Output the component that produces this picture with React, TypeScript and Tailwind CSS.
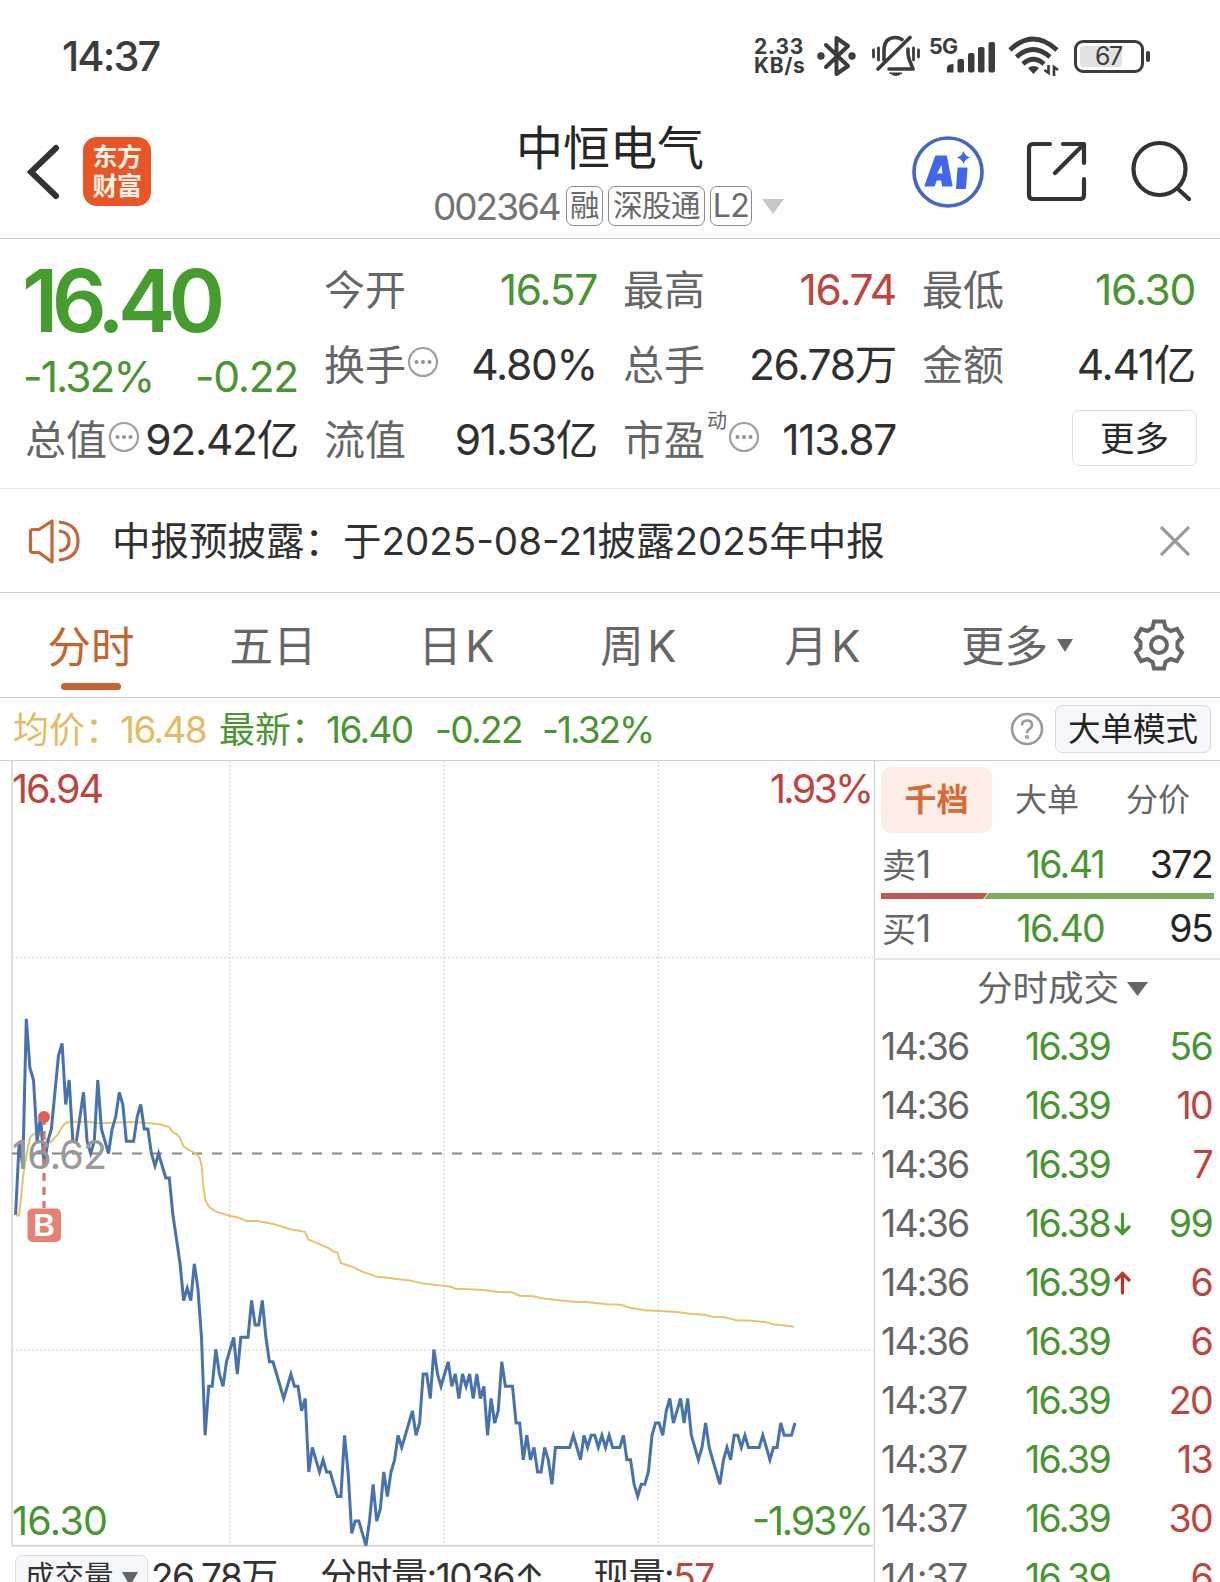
import type { ReactNode } from 'react';

const PREV_CLOSE = 16.62;

// one entry per minute, in cents relative to the previous close
const PRICE_OFFSETS = [
  -5, 1, -1, 11, 7, 6, 1, 3, -1, 1, 2, 5, 8, 9, 4, 6, 1, 1, 3, 5,
  1, 0, 1, 6, 2, 1, 0, 2, 3, 5, 4, 1, 1, 1, 3, 4, 2, 2, 0, -1,
  0, -1, -2, -2, -5, -7, -9, -12, -11, -12, -9, -11, -15, -23, -19, -19, -16, -18, -19, -17,
  -16, -15, -18, -15, -15, -15, -12, -14, -14, -12, -15, -17, -17, -18, -19, -20, -19, -18, -19, -19,
  -21, -20, -26, -24, -25, -26, -25, -26, -26, -27, -28, -28, -23, -26, -31, -30, -30, -31, -32, -30,
  -27, -30, -29, -26, -28, -26, -25, -23, -24, -23, -22, -21, -23, -22, -18, -18, -20, -16, -18, -19,
  -18, -17, -19, -18, -20, -18, -19, -18, -20, -18, -20, -19, -23, -20, -22, -21, -17, -19, -19, -19,
  -22, -22, -25, -23, -25, -24, -26, -26, -24, -25, -27, -24, -24, -24, -24, -24, -23, -24, -25, -23,
  -24, -23, -23, -24, -23, -24, -23, -24, -24, -24, -23, -25, -25, -27, -28, -27, -27, -26, -23, -22,
  -22, -23, -21, -20, -22, -21, -20, -22, -20, -23, -24, -25, -24, -22, -24, -25, -26, -27, -25, -24,
  -25, -23, -23, -24, -23, -24, -24, -24, -24, -23, -24, -25, -24, -24, -22, -23, -23, -23, -22,
];

const AVERAGE_LINE =
  '15.7,453.4 19,453.4 20.7,438 23.3,413 26.7,391.6 30,375.5 33.3,372.3 39.3,372.3 45,376.6 50.7,380.1 53.3,377.3 58.3,371.9 62,364.8 65.7,361.2 68.7,359.8 88.3,359.8 100,361.2 116.7,360.5 130,360.1 140,360.5 153.3,361.6 160,362.6 169.3,365.1 172.3,369.8 176.7,372.3 180,375.9 183.3,384.1 188.3,387.6 196.7,391.9 200,396.9 201.7,404.1 203.3,423.7 205.3,438 208.7,444.4 215,449.1 230,454.1 238.3,455.5 246.7,459.1 257.3,459.1 273.3,461.9 290,467.3 305,469.8 308.3,477.3 320,482.3 328.3,485.9 333.3,489.4 337.3,490.5 340.7,500.9 353.3,505.1 361.7,509.4 378.3,515.1 385,515.5 396.7,516.9 410,518.4 423.3,521.6 440,523.4 445,523.7 451.7,525 455,526.7 465,527 483.3,528 498.3,530 511.7,530.3 520,533.7 533.3,534.3 540,536 563.3,538.7 576.7,540 586.7,540 606.7,542.3 620.7,542.7 630,545.7 645,548.3 660,549 676.7,550 691.7,552 705,552.7 711.7,554.7 723.3,555 736.7,558.3 751.7,558.7 765,560 773.3,562.3 786.7,563.7 794,564.7';

const MID_Y = 391.5;
const PRICE_LINE = PRICE_OFFSETS.map(
  (cents, minute) => `${(15.6 + minute * 3.575).toFixed(1)},${(MID_Y - cents * 12.25).toFixed(1)}`
).join(' ');

interface Trade {
  time: string;
  price: string;
  volume: number;
  side: 'buy' | 'sell';
  move?: 'up' | 'down';
}

const TRADES: Trade[] = [
  { time: '14:36', price: '16.39', volume: 56, side: 'sell' },
  { time: '14:36', price: '16.39', volume: 10, side: 'buy' },
  { time: '14:36', price: '16.39', volume: 7, side: 'buy' },
  { time: '14:36', price: '16.38', volume: 99, side: 'sell', move: 'down' },
  { time: '14:36', price: '16.39', volume: 6, side: 'buy', move: 'up' },
  { time: '14:36', price: '16.39', volume: 6, side: 'buy' },
  { time: '14:37', price: '16.39', volume: 20, side: 'buy' },
  { time: '14:37', price: '16.39', volume: 13, side: 'buy' },
  { time: '14:37', price: '16.39', volume: 30, side: 'buy' },
  { time: '14:37', price: '16.39', volume: 6, side: 'buy' },
];

export default function App() {
  return (
    <div className="flex h-[1582px] w-[1220px] flex-col overflow-hidden bg-[#fefefe] font-['Inter','Noto_Sans_CJK_SC',sans-serif] leading-none whitespace-nowrap text-[#333]">
      <StatusBar />
      <Header />
      <Quote />
      <Notice />
      <PeriodTabs />
      <PriceSummary />
      <div className="flex min-h-0 flex-1">
        <div className="flex w-[874px] shrink-0 flex-col">
          <Chart />
          <VolumeBar />
        </div>
        <OrderPanel />
      </div>
    </div>
  );
}

function StatusBar() {
  return (
    <div className="flex h-[112px] shrink-0 items-center pl-[62px] text-[#3c3c3c]">
      <span className="w-[692px] pt-[2px] text-[41.5px] font-medium tracking-[-0.045em]">14:37</span>
      <div className="w-[63px] text-[21px] leading-[19px] font-bold">
        <div className="tracking-[0.04em]">2.33</div>
        <div className="tracking-[0.03em]">KB/s</div>
      </div>
      <svg className="h-[42px] w-[40px]" viewBox="0 0 40 42" fill="none" stroke="currentColor" strokeWidth="4" strokeLinejoin="round" strokeLinecap="round">
        <path d="M9 10 31 31 19.500 39V3L31 11 9 32" />
        <circle cx="4" cy="21" r="1.700" />
        <circle cx="35" cy="21" r="1.700" />
      </svg>
      <svg className="ml-[14px] h-[42px] w-[50px]" viewBox="0 0 50 42" fill="none" stroke="currentColor" strokeWidth="3.600" strokeLinecap="round" strokeLinejoin="round">
        <path d="M13 25V16C13 6 18 2.500 24.500 2.500Q28 2.500 31 4.500M37 14V18C37 24 40 28 42 34H18M7 34 39 2.500" />
        <path d="M2.500 15v7M7.500 13v12M42.500 13v12M47.500 15v7" strokeWidth="2.800" />
        <path d="M19 38H31Q25 43 19 38Z" fill="currentColor" strokeWidth="1" />
      </svg>
      <div className="relative ml-[9px] h-[36px] w-[66px]">
        <span className="absolute top-[-2px] left-[-1px] text-[21.5px] font-bold tracking-[-0.04em]">5G</span>
        <svg className="h-[36px] w-[66px]" viewBox="0 0 66 36" fill="currentColor">
          <path d="M17 34.500V29Q18 26 23.500 26V34.500Z" />
          <rect x="27.500" y="21" width="6.500" height="13.500" rx="2" />
          <rect x="38" y="15" width="6.500" height="19.500" rx="2" />
          <rect x="48" y="9" width="6.500" height="25.500" rx="2" />
          <rect x="58.500" y="4" width="6.500" height="30.500" rx="2" />
        </svg>
      </div>
      <svg className="ml-[12px] h-[40px] w-[52px]" viewBox="0 0 52 40" fill="none" stroke="currentColor" strokeWidth="4.800">
        <path d="M2 14Q25-8 49 14M8.500 21Q25 6 42 21M15 28Q25 18.500 36 28" />
        <path d="M20 32Q25.500 28 31 32L25.500 38Z" fill="currentColor" stroke="none" />
        <path d="M40.500 29V37L36.500 34M46 40V31L50 34" strokeWidth="2.600" />
      </svg>
      <div className="ml-[14px] flex h-[33px] w-[70px] items-center rounded-[9px] border-[3px] border-[#3c3c3c] p-[3px]">
        <div className="flex h-full w-[42px] items-center rounded-[4px] bg-[#e2e2e2] pl-[15px]">
          <span className="text-[25px] tracking-[-0.06em]">67</span>
        </div>
      </div>
      <div className="ml-[2px] h-[11px] w-[4px] rounded-full bg-[#3c3c3c]" />
    </div>
  );
}

function Header() {
  return (
    <header className="flex h-[127px] shrink-0 items-start border-b border-[#d0d0d0]">
      <svg className="mt-[32px] ml-[24px] h-[56px] w-[38px]" viewBox="0 0 38 56" fill="none" stroke="#333" strokeWidth="6" strokeLinecap="round" strokeLinejoin="miter">
        <path d="M32 4 7 28 32 52" />
      </svg>
      <div className="mt-[25px] ml-[21px] grid h-[69px] w-[68px] content-center justify-center rounded-[14px] bg-[#ea5527] text-center text-[25px] leading-[29px] font-bold tracking-[-0.02em] text-[#fff3e6]">
        <div>东方</div>
        <div>财富</div>
      </div>
      <div className="ml-[282px] w-[370px]">
        <h1 className="mt-[12px] pl-[83px] text-[47px] leading-[48px] text-[#262626]">中恒电气</h1>
        <div className="mt-[14px] flex h-[40px] items-center text-[#6a6a6a]">
          <span className="w-[133px] text-[37px] tracking-[-0.055em] text-[#747474]">002364</span>
          <Tag className="w-[37px]">融</Tag>
          <Tag className="ml-[5px] w-[97px]">深股通</Tag>
          <Tag className="ml-[5px] w-[42px] text-[32px]">L2</Tag>
          <svg className="ml-[9px] h-[16px] w-[24px]" viewBox="0 0 24 16" fill="#c8c8c8">
            <path d="M1 1H23L12 16Z" />
          </svg>
        </div>
      </div>
      <svg className="mt-[23px] ml-[108px] h-[74px] w-[74px]" viewBox="0 0 74 74">
        <circle cx="37" cy="37" r="34" fill="none" stroke="#4464cf" strokeWidth="3.700" />
        <g fill="#4066ee" stroke="#4066ee" strokeWidth="2" strokeLinejoin="round">
          <path d="M14.500 50.500 25 21.500H35L40.500 50.500H32L31 44.500H25L23 50.500Z" />
          <path d="M47.500 33.500H55.500L54 53H46Z" />
        </g>
        <path d="M26 38.500H31.500L30.500 30Z" fill="#fefefe" />
        <path d="M52.500 16Q54 21 59 22.500 54 24 52.500 29 51 24 46 22.500 51 21 52.500 16Z" fill="#4066ee" />
      </svg>
      <svg className="mt-[29px] ml-[41px] h-[60px] w-[62px]" viewBox="0 0 62 60" fill="none" stroke="#333" strokeWidth="4.200" strokeLinecap="round" strokeLinejoin="round">
        <path d="M24 3H7Q3 3 3 7V54Q3 58 7 58H54Q58 58 58 54V38M37 3H58V22M57 4 29 32" />
      </svg>
      <svg className="mt-[28px] ml-[42px] h-[64px] w-[64px]" viewBox="0 0 64 64" fill="none" stroke="#333" strokeWidth="4.200" strokeLinecap="round">
        <circle cx="29.500" cy="29" r="26" />
        <path d="M48 49 59 59" />
      </svg>
    </header>
  );
}

function Tag({ className, children }: { className: string; children: ReactNode }) {
  return (
    <span
      className={`flex h-[40px] items-center justify-center rounded-[7px] border-[1.500px] border-[#8a8a8a] text-[29.5px] tracking-[-0.02em] ${className}`}
    >
      {children}
    </span>
  );
}

function Quote() {
  return (
    <section className="grid h-[250px] shrink-0 grid-cols-[273px_273px_273px_273px] gap-x-[26px] border-b border-[#e4e4e4] pl-[25px]">
      <div className="flex flex-col">
        <div className="mt-[20px] -ml-[3px] h-[84px] text-[86px] leading-[84px] font-semibold tracking-[-0.078em] text-[#459d2d]">16.40</div>
        <div className="mt-[13px] -ml-[2px] flex h-[42px] items-center justify-between text-[42.5px] tracking-[-0.045em] text-[#47962f]">
          <span>-1.32%</span>
          <span className="tracking-[-0.03em]">-0.22</span>
        </div>
        <div className="mt-[5px]">
          <Stat label="总值" value="92.42亿" info />
        </div>
      </div>
      <div className="flex flex-col pt-[14px]">
        <Stat label="今开" value="16.57" color="text-[#47962f]" />
        <Stat label="换手" value="4.80%" info />
        <Stat label="流值" value="91.53亿" />
      </div>
      <div className="flex flex-col pt-[14px]">
        <Stat label="最高" value="16.74" color="text-[#c0433c]" />
        <Stat label="总手" value="26.78万" />
        <Stat label="市盈" value="113.87" mark="动" info />
      </div>
      <div className="flex flex-col pt-[14px]">
        <Stat label="最低" value="16.30" color="text-[#47962f]" />
        <Stat label="金额" value="4.41亿" />
        <button className="mt-[7px] -mr-[2px] h-[56px] w-[125px] self-end rounded-[7px] border-[1.5px] border-[#e0e0e0] pt-[2px] text-[34.500px] text-[#2a2a2a]">更多</button>
      </div>
    </section>
  );
}

interface StatProps {
  label: string;
  value: string;
  color?: string;
  mark?: string;
  info?: boolean;
}

function Stat({ label, value, color = 'text-[#303030]', mark, info = false }: StatProps) {
  return (
    <div className="flex h-[75px] items-center">
      <span className="text-[41px] text-[#666]">{label}</span>
      {mark && <span className="mb-[40px] ml-[2px] text-[20px] text-[#666]">{mark}</span>}
      {info && (
        <svg className="mb-[7px] ml-[1px] h-[32px] w-[32px]" viewBox="0 0 32 32" fill="#929292">
          <circle cx="16" cy="16" r="14" fill="none" stroke="#a0a0a0" strokeWidth="2.200" />
          <circle cx="9.500" cy="16" r="2" />
          <circle cx="16" cy="16" r="2" />
          <circle cx="22.500" cy="16" r="2" />
        </svg>
      )}
      <span className={`ml-auto text-[42.5px] tracking-[-0.03em] ${color}`}>{value}</span>
    </div>
  );
}

function Notice() {
  return (
    <div className="flex h-[104px] shrink-0 items-center border-b border-[#d0d0d0] pl-[27px]">
      <svg className="h-[46px] w-[54px]" viewBox="0 0 54 46" fill="none" stroke="#c4683a" strokeWidth="3.200" strokeLinejoin="round">
        <path d="M3.500 14Q3.500 11.500 6 11.500H12L25 3V44L12 34.500H6Q3.500 34.500 3.500 32ZM32 4Q51 6 51 23T32 42M32 13Q42 14 42 23T32 33" />
      </svg>
      <span className="ml-[31px] pt-[2px] text-[38.5px] text-[#303030]">中报预披露：于2025-08-21披露2025年中报</span>
      <svg className="mr-[30px] ml-auto h-[30px] w-[30px]" viewBox="0 0 30 30" stroke="#999" strokeWidth="3.200">
        <path d="M1 1 29 29M29 1 1 29" />
      </svg>
    </div>
  );
}

function PeriodTabs() {
  return (
    <nav className="flex h-[105px] shrink-0 items-center border-b border-[#d0d0d0] text-[43.5px] text-[#666]">
      <div className="flex h-full w-[182px] flex-col items-center pt-[33px] text-[#c66430]">
        <span>分时</span>
        <span className="mt-[13px] h-[7px] w-[60px] rounded-full bg-[#c66430]" />
      </div>
      <div className="w-[182px] pt-[4px] text-center">五日</div>
      <div className="w-[188px] pt-[4px] text-center tracking-[0.08em]">日K</div>
      <div className="w-[176px] pt-[4px] text-center tracking-[0.08em]">周K</div>
      <div className="w-[192px] pt-[4px] text-center tracking-[0.08em]">月K</div>
      <div className="ml-[41px] flex items-center pt-[4px]">
        更多
        <svg className="mb-[4px] ml-[9px] h-[13px] w-[16px]" viewBox="0 0 16 13" fill="#666">
          <path d="M0 0H16L8 13Z" />
        </svg>
      </div>
      <svg className="mr-[34px] ml-auto h-[54px] w-[54px]" viewBox="0 0 54 54" fill="none" stroke="#666" strokeWidth="4" strokeLinejoin="miter">
        <path d="M22 3.500H32L33.500 10 38.500 13 45 11 50 19.500 45.500 24V30L50 34.500 45 43 38.500 41 33.500 44 32 50.500H22L20.500 44 15.500 41 9 43 4 34.500 8.500 30V24L4 19.500 9 11 15.500 13 20.500 10Z" />
        <circle cx="27" cy="27" r="8" />
      </svg>
    </nav>
  );
}

function PriceSummary() {
  return (
    <div className="flex h-[63px] shrink-0 items-center border-b border-[#cfcfcf] pl-[13px] text-[37px] tracking-[-0.045em] text-[#47962f]">
      <span className="w-[107px] pt-[2px] text-[36px] tracking-normal text-[#e3bc62]">均价：</span>
      <span className="w-[99px] text-[#e3bc62]">16.48</span>
      <span className="w-[107px] pt-[2px] text-[36px] tracking-normal">最新：</span>
      <span className="w-[109px]">16.40</span>
      <span className="w-[107px]">-0.22</span>
      <span className="tracking-[-0.055em]">-1.32%</span>
      <svg className="ml-auto h-[34px] w-[34px]" viewBox="0 0 34 34" fill="none" stroke="#999" strokeWidth="2.600">
        <circle cx="17" cy="17" r="15" />
        <path d="M12 13.500Q12 8.500 17 8.500T22 13Q22 15.500 19.500 17T17 21" />
        <circle cx="17" cy="25" r=".8" />
      </svg>
      <button className="mr-[9px] ml-[11px] h-[48px] w-[156px] rounded-[7px] border-[1.5px] border-[#d6d9dd] bg-[#f6f7fa] pt-[2px] text-[32.500px] tracking-normal text-[#222]">大单模式</button>
    </div>
  );
}

function Chart() {
  return (
    <svg className="h-[787px] w-[874px] shrink-0" viewBox="0 -1 874 787" fill="none">
      <g stroke="#dcdcdc" strokeWidth="1.500" strokeDasharray="2 2">
        <path d="M12 195.500H873M12 588H873M229.800-1V783M444.300-1V783M658.500-1V783" />
      </g>
      <path d="M12-1V784" stroke="#e0e0e0" strokeWidth="2" />
      <path d="M12 783.800H873" stroke="#d4d4d4" strokeWidth="2" />
      <path d="M12 391.500H873" stroke="#858585" strokeWidth="2" strokeDasharray="10 10" strokeDashoffset="0" />
      <polyline points={AVERAGE_LINE} stroke="#e6c46c" strokeWidth="2" />
      <polyline points={PRICE_LINE} stroke="#4672b0" strokeWidth="3" />
      <path d="M44 355V446" stroke="#d9736a" strokeWidth="3.200" strokeDasharray="8 6" />
      <circle cx="44" cy="355" r="6" fill="#e2604f" />
      <rect x="27.500" y="446.500" width="33.500" height="33.500" rx="5" fill="#e58272" />
      <g fontSize="39.5">
        <text x="33" y="474" fontSize="30" fontWeight="600" fill="#fff" textLength="22" lengthAdjust="spacingAndGlyphs">B</text>
        <text x="12" y="407" fill="#999" textLength="95">{PREV_CLOSE.toFixed(2)}</text>
        <text x="12" y="41" fill="#c0433c" textLength="92">16.94</text>
        <text x="770" y="41" fill="#c0433c" textLength="104">1.93%</text>
        <text x="12" y="773" fill="#47962f" textLength="96">16.30</text>
        <text x="752" y="773" fill="#47962f" textLength="122">-1.93%</text>
      </g>
    </svg>
  );
}

function VolumeBar() {
  return (
    <div className="flex h-[60px] shrink-0 items-start pt-[7px] pl-[15px] text-[37px] tracking-[-0.04em]">
      <div className="flex h-[48px] w-[133px] items-center rounded-[7px] border-[1.5px] border-[#dcdfe4] bg-[#f6f7fa] pb-[5px] pl-[9px] text-[29.500px] tracking-normal">
        成交量
        <svg className="mt-[4px] ml-[8px] h-[14px] w-[16px]" viewBox="0 0 16 14" fill="#666">
          <path d="M0 0H16L8 14Z" />
        </svg>
      </div>
      <span className="ml-[3px] w-[169px] pt-[3px]">26.78万</span>
      <span className="w-[273px] pt-[3px]">分时量:1036↑</span>
      <span className="pt-[3px]">
        现量:<span className="text-[#c0433c]">57</span>
      </span>
    </div>
  );
}

function OrderPanel() {
  return (
    <aside className="flex w-[346px] shrink-0 flex-col border-l border-[#cfcfcf] text-[37.5px] tracking-[-0.045em]">
      <div className="mt-[6px] flex h-[66px] shrink-0 items-center pl-[6px] text-[32px] tracking-normal text-[#666]">
        <span className="flex h-full w-[111px] items-center justify-center rounded-[10px] bg-[#fcede6] font-bold text-[#d96a33]">千档</span>
        <span className="ml-[23px]">大单</span>
        <span className="ml-[47px]">分价</span>
      </div>
      <Level label="卖1" price="16.41" volume="372" className="h-[60px] pt-[3px]" />
      <svg className="ml-[6px] h-[6px] w-[333px] shrink-0" viewBox="0 0 333 6">
        <path d="M0 0H107L102 6H0Z" fill="#c65650" />
        <path d="M108 0H333V6H103Z" fill="#77b05c" />
      </svg>
      <Level label="买1" price="16.40" volume="95" className="h-[59px]" />
      <div className="flex h-[59px] shrink-0 items-center justify-center gap-[8px] border-t-2 border-[#e6e6e6] pl-[30px] text-[35.500px] tracking-normal text-[#666]">
        分时成交
        <svg className="h-[14px] w-[21px]" viewBox="0 0 21 14" fill="#666">
          <path d="M0 0H21L10.500 14Z" />
        </svg>
      </div>
      {TRADES.map((trade, i) => (
        <TradeRow key={i} {...trade} />
      ))}
    </aside>
  );
}

interface LevelProps {
  label: string;
  price: string;
  volume: string;
  className: string;
}

function Level({ label, price, volume, className }: LevelProps) {
  return (
    <div className={`flex shrink-0 items-center pr-[8px] pl-[7px] ${className}`}>
      <span className="w-[112px] text-[#666]">
        <span className="text-[34px] tracking-normal">{label[0]}</span>
        {label[1]}
      </span>
      <span className="w-[110px] text-right text-[#47962f]">{price}</span>
      <span className="ml-auto text-[#262626]">{volume}</span>
    </div>
  );
}

function TradeRow({ time, price, volume, side, move }: Trade) {
  return (
    <div className="flex h-[59px] shrink-0 items-center pr-[8px] pl-[6px]">
      <span className="w-[144px] tracking-[-0.05em] text-[#666]">{time}</span>
      <span className="text-[#47962f]">{price}</span>
      {move && (
        <svg
          className={`ml-[4px] h-[24px] w-[17px] ${move === 'up' ? 'text-[#c0332b]' : 'rotate-180 text-[#47962f]'}`}
          viewBox="0 0 17 24"
          fill="none"
          stroke="currentColor"
          strokeWidth="3.200"
          strokeLinecap="round"
        >
          <path d="M8.500 22V2.500M2 9 8.500 2.500 15 9" />
        </svg>
      )}
      <span className={`ml-auto ${side === 'buy' ? 'text-[#c0433c]' : 'text-[#47962f]'}`}>{volume}</span>
    </div>
  );
}
